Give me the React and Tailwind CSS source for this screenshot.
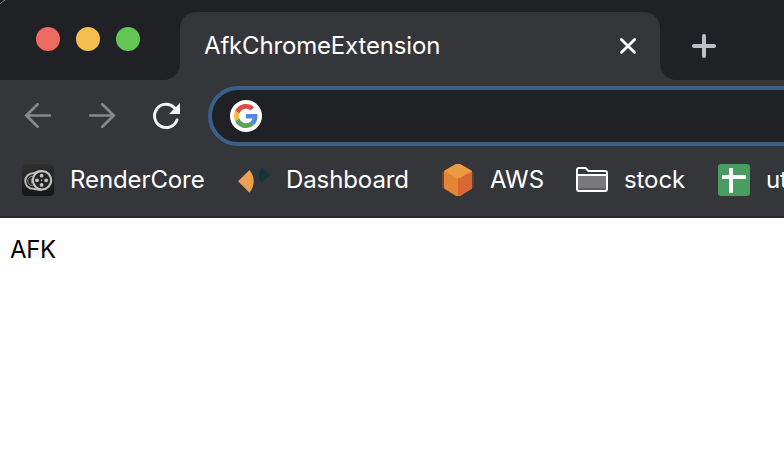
function Bookmark({ className, children, label }) {
  return (
    <div className={`flex h-8 shrink-0 items-center gap-4 ${className}`}>
      {children}
      <span className="whitespace-nowrap leading-8 tracking-[-0.1px]">{label}</span>
    </div>
  );
}

function TabStrip() {
  return (
    <div className="flex h-20 bg-[#35363a]">
      <div className="flex h-20 w-[180px] shrink-0 gap-4 rounded-br-[16px] bg-[#202124] pl-9 pt-[27px]">
        <i className="size-6 rounded-full bg-[#ed6a5e]" />
        <i className="size-6 rounded-full bg-[#f5bf4f]" />
        <i className="size-6 rounded-full bg-[#62c554]" />
      </div>
      <div className="w-[480px] shrink-0 bg-[#202124] pt-3">
        <div className="flex h-[68px] items-center justify-between rounded-t-[16px] bg-[#35363a] pl-6 pr-[22px]">
          <span className="tracking-[-0.17px] leading-8">AfkChromeExtension</span>
          <svg width="20" height="20" viewBox="0 0 20 20" stroke="#fff" strokeWidth="2.8" strokeLinecap="round">
            <path d="M3.4 3.4 L16.6 16.6 M16.6 3.4 L3.4 16.6" />
          </svg>
        </div>
      </div>
      <div className="h-20 flex-1 rounded-bl-[16px] bg-[#202124] pl-8 pt-[34px]">
        <svg width="24" height="24" viewBox="0 0 24 24" stroke="#bdc1c6" strokeWidth="4" strokeLinecap="round">
          <path d="M12 2 V22 M2 12 H22" />
        </svg>
      </div>
    </div>
  );
}

function Toolbar() {
  return (
    <div className="flex h-[72px] items-center overflow-hidden">
      <svg className="ml-[22px] shrink-0" width="32" height="32" viewBox="0 0 32 32" fill="none" stroke="#87888b" strokeWidth="2.7" strokeLinecap="round">
        <path d="M15.7 4.3 L4.3 15.5 L15.7 26.7 M4.5 15.5 H27.8" />
      </svg>
      <svg className="ml-8 shrink-0" width="32" height="32" viewBox="0 0 32 32" fill="none" stroke="#87888b" strokeWidth="2.7" strokeLinecap="round">
        <path d="M16.3 4.3 L27.7 15.5 L16.3 26.7 M4.2 15.5 H27.5" />
      </svg>
      <svg className="ml-8 shrink-0" width="32" height="32" viewBox="0 0 32 32" fill="none">
        <path d="M27 20 A11.6 11.6 0 1 1 24.5 7.9" stroke="#f1f3f4" strokeWidth="3" strokeLinecap="round" />
        <path d="M30 3 V14 H19 Z" fill="#f1f3f4" />
      </svg>
      <div className="ml-[26px] flex h-[60px] w-[620px] shrink-0 items-center rounded-full border-4 border-[#386089] bg-[#202124] pl-[18px]">
        <div className="flex size-8 items-center justify-center rounded-full bg-white">
          <svg width="24" height="24" viewBox="0 0 48 48">
            <path fill="#db4f42" d="M24 9.5c3.54 0 6.71 1.22 9.21 3.6l6.85-6.85C35.9 2.38 30.47 0 24 0 14.62 0 6.51 5.38 2.56 13.22l7.98 6.19C12.43 13.72 17.74 9.5 24 9.5z" />
            <path fill="#4f86ec" d="M46.98 24.55c0-1.57-.15-3.09-.38-4.55H24v9.02h12.94c-.58 2.96-2.26 5.48-4.78 7.18l7.73 6c4.51-4.18 7.09-10.36 7.09-17.65z" />
            <path fill="#f2bd42" d="M10.53 28.59c-.48-1.45-.76-2.99-.76-4.59s.27-3.14.76-4.59l-7.98-6.19C.92 16.46 0 20.12 0 24s.92 7.54 2.56 10.78l7.97-6.19z" />
            <path fill="#58a55c" d="M24 48c6.48 0 11.93-2.13 15.89-5.81l-7.73-6c-2.15 1.45-4.92 2.3-8.16 2.3-6.26 0-11.57-4.22-13.47-9.91l-7.98 6.19C6.51 42.62 14.62 48 24 48z" />
          </svg>
        </div>
      </div>
    </div>
  );
}

function Bookmarks() {
  return (
    <div className="flex h-[66px] overflow-hidden border-b-2 border-[#29272a] pl-[22px] pt-3">
      <Bookmark className="w-[216px]" label="RenderCore">
        <svg width="32" height="32" viewBox="0 0 32 32" fill="none">
          <defs>
            <linearGradient id="tile" x1="0" y1="0" x2="0" y2="1">
              <stop stopColor="#303030" />
              <stop offset="1" stopColor="#151515" />
            </linearGradient>
          </defs>
          <rect width="32" height="32" rx="4" fill="url(#tile)" />
          <path d="M20 7 C15 6.5 14.5 9 11 9.2 A7.8 7.8 0 0 0 11 24.8 C14 25 15 26 20 26" stroke="#b8b8b8" strokeWidth="2" />
          <path d="M12.5 12.8 A4.6 4.6 0 1 0 12.5 21" stroke="#999" strokeWidth="1" />
          <path d="M9.3 19.5 V14.8 H11 Q12.5 16 10 17 L12 19.5" stroke="#999" strokeWidth="0.9" />
          <circle cx="20" cy="16.3" r="9.2" fill="#242424" stroke="#c2c2c2" strokeWidth="2.2" />
          <g fill="#c2c2c2">
            <circle cx="19.6" cy="11.7" r="1.9" />
            <circle cx="19.6" cy="20.9" r="1.9" />
            <circle cx="15" cy="16.3" r="1.9" />
            <circle cx="24.2" cy="16.3" r="1.9" />
            <circle cx="19.6" cy="16.3" r="0.8" />
          </g>
        </svg>
      </Bookmark>
      <Bookmark className="w-[204px]" label="Dashboard">
        <svg width="32" height="32" viewBox="0 0 32 32">
          <path d="M0 17.3 L11.5 6 Q20 17.3 11.5 28.7 Z" fill="#e9a053" />
          <path d="M23.7 3.3 L32 11 L23.7 18.8 Q18 11 23.7 3.3 Z" fill="#14363b" />
        </svg>
      </Bookmark>
      <Bookmark className="w-[134px]" label="AWS">
        <svg width="32" height="32" viewBox="0 0 32 32">
          <path d="M0 8 H2 V24 H0 Z" fill="#654937" />
          <path d="M30 8 H32 V24 H30 Z" fill="#634037" />
          <path d="M14 0 H18 L30 7 V24.5 L18 32 H14 L2 24.5 V7 Z" fill="#e48435" />
          <path d="M16 14 L30 7.5 V24.5 L18 32 H16 Z" fill="#d96731" />
          <path d="M14 0 H18 L30 7 L18 14 H14 L2 7 Z" fill="#ed9b40" />
        </svg>
      </Bookmark>
      <Bookmark className="w-[142px]" label="stock">
        <svg width="32" height="32" viewBox="0 0 32 32" fill="none">
          <path d="M2 12 H30 V26 H2 Z" fill="#79797b" />
          <path d="M2 24 H30 V26 H2 Z" fill="#5e5e60" />
          <path d="M1 25 V6 Q1 4 3 4 H9.5 L12.5 7 H29 Q31 7 31 9 V25 Q31 27 29 27 H3 Q1 27 1 25 Z M1 11 H31" stroke="#fff" strokeWidth="2" />
        </svg>
      </Bookmark>
      <Bookmark className="w-[120px]" label="ut">
        <svg width="32" height="32" viewBox="0 0 32 32">
          <rect width="32" height="32" rx="3" fill="#489d60" />
          <path d="M11 4 H15 V11 H28 V15 H15 V29 H11 V15 H4 V11 H11 Z" fill="#fff" />
        </svg>
      </Bookmark>
    </div>
  );
}

export default function App() {
  return (
    <div className="relative h-[450px] w-[784px] overflow-hidden bg-white font-[Inter,sans-serif] text-[24px] text-white">
      <div className="bg-[#35363a]">
        <TabStrip />
        <Toolbar />
        <Bookmarks />
      </div>
      <main className="pl-[10px] pt-4 leading-8 tracking-[-0.4px] text-black">AFK</main>
      <svg className="absolute left-0 top-0" width="8" height="8" viewBox="0 0 8 8" fill="none">
        <path d="M0 0 H5 Q2 1 0 4 Z" fill="#111" />
        <path d="M0 4 Q2 1.2 5.5 0" stroke="#85868a" strokeWidth="1" />
      </svg>
    </div>
  );
}
